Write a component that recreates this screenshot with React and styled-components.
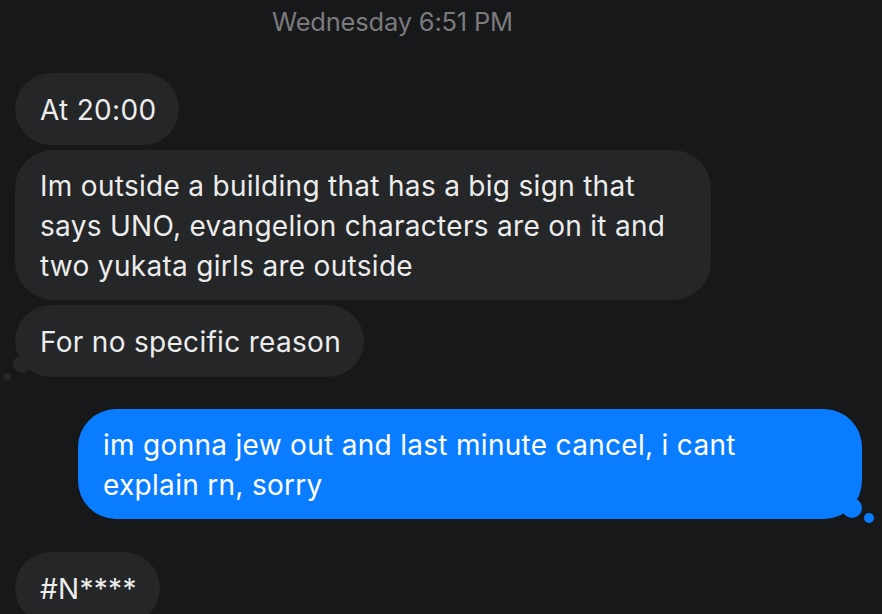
import React from "react";
import styled, { createGlobalStyle, css } from "styled-components";

const Global = createGlobalStyle`
  html, body { margin: 0; padding: 0; background: #17181a; }
  body { font-family: Inter, "Noto Sans", "Liberation Sans", sans-serif; overflow: hidden; }
`;

const Thread = styled.div`
  width: 882px;
  height: 614px;
  overflow: hidden;
  background: #17181a;
  display: flex;
  flex-direction: column;
  padding: 0 20px 0 15px;
  box-sizing: border-box;
`;

const Stamp = styled.div`
  align-self: flex-start;
  margin: 7px 0 0 257px;
  color: #7b7b7d;
  font-size: 25.5px;
  line-height: 30px;
  letter-spacing: -0.2px;
`;

const Group = styled.div`
  display: flex;
  flex-direction: column;
  align-items: ${p => (p.$mine ? "flex-end" : "flex-start")};
  gap: 5px;
  margin-top: ${p => p.$top}px;
`;

const Bubble = styled.div`
  position: relative;
  box-sizing: border-box;
  max-width: ${p => p.$max}px;
  padding: 17px 23px 15px 25px;
  border-radius: 36px;
  font-size: 28px;
  line-height: 40px;
  letter-spacing: 0.3px;
  color: ${p => (p.$mine ? "#ffffff" : "#ececec")};
  background: ${p => (p.$mine ? "#0a7cff" : "#252627")};
  ${p => p.$lines > 1 && css`padding-top: 16px; padding-bottom: 14px; border-radius: 38px;`}
  ${p =>
    p.$tail &&
    !p.$mine &&
    css`
      &::before {
        content: "";
        position: absolute;
        left: -2px;
        bottom: 4px;
        width: 18px;
        height: 18px;
        border-radius: 50%;
        background: #252627;
      }
      &::after {
        content: "";
        position: absolute;
        left: -12px;
        bottom: -4px;
        width: 8px;
        height: 8px;
        border-radius: 50%;
        background: #252627;
      }
    `}
  ${p =>
    p.$tail &&
    p.$mine &&
    css`
      &::before {
        content: "";
        position: absolute;
        right: 0px;
        bottom: 1px;
        width: 20px;
        height: 20px;
        border-radius: 50%;
        background: #0a7cff;
      }
      &::after {
        content: "";
        position: absolute;
        right: -12px;
        bottom: -4px;
        width: 10px;
        height: 10px;
        border-radius: 50%;
        background: #0a7cff;
      }
    `}
`;

export default function App() {
  return (
    <>
      <Global />
      <Thread>
        <Stamp>Wednesday 6:51 PM</Stamp>
        <Group $top={36}>
          <Bubble $max={300}>At 20:00</Bubble>
          <Bubble $max={696} $lines={3}>
            Im outside a building that has a big sign that says UNO, evangelion characters are on it and two yukata girls are outside
          </Bubble>
          <Bubble $max={400} $tail>For no specific reason</Bubble>
        </Group>
        <Group $mine $top={32}>
          <Bubble $mine $max={784} $lines={2} $tail>
            im gonna jew out and last minute cancel, i cant explain rn, sorry
          </Bubble>
        </Group>
        <Group $top={33}>
          <Bubble $max={300}>#N****</Bubble>
        </Group>
      </Thread>
    </>
  );
}
